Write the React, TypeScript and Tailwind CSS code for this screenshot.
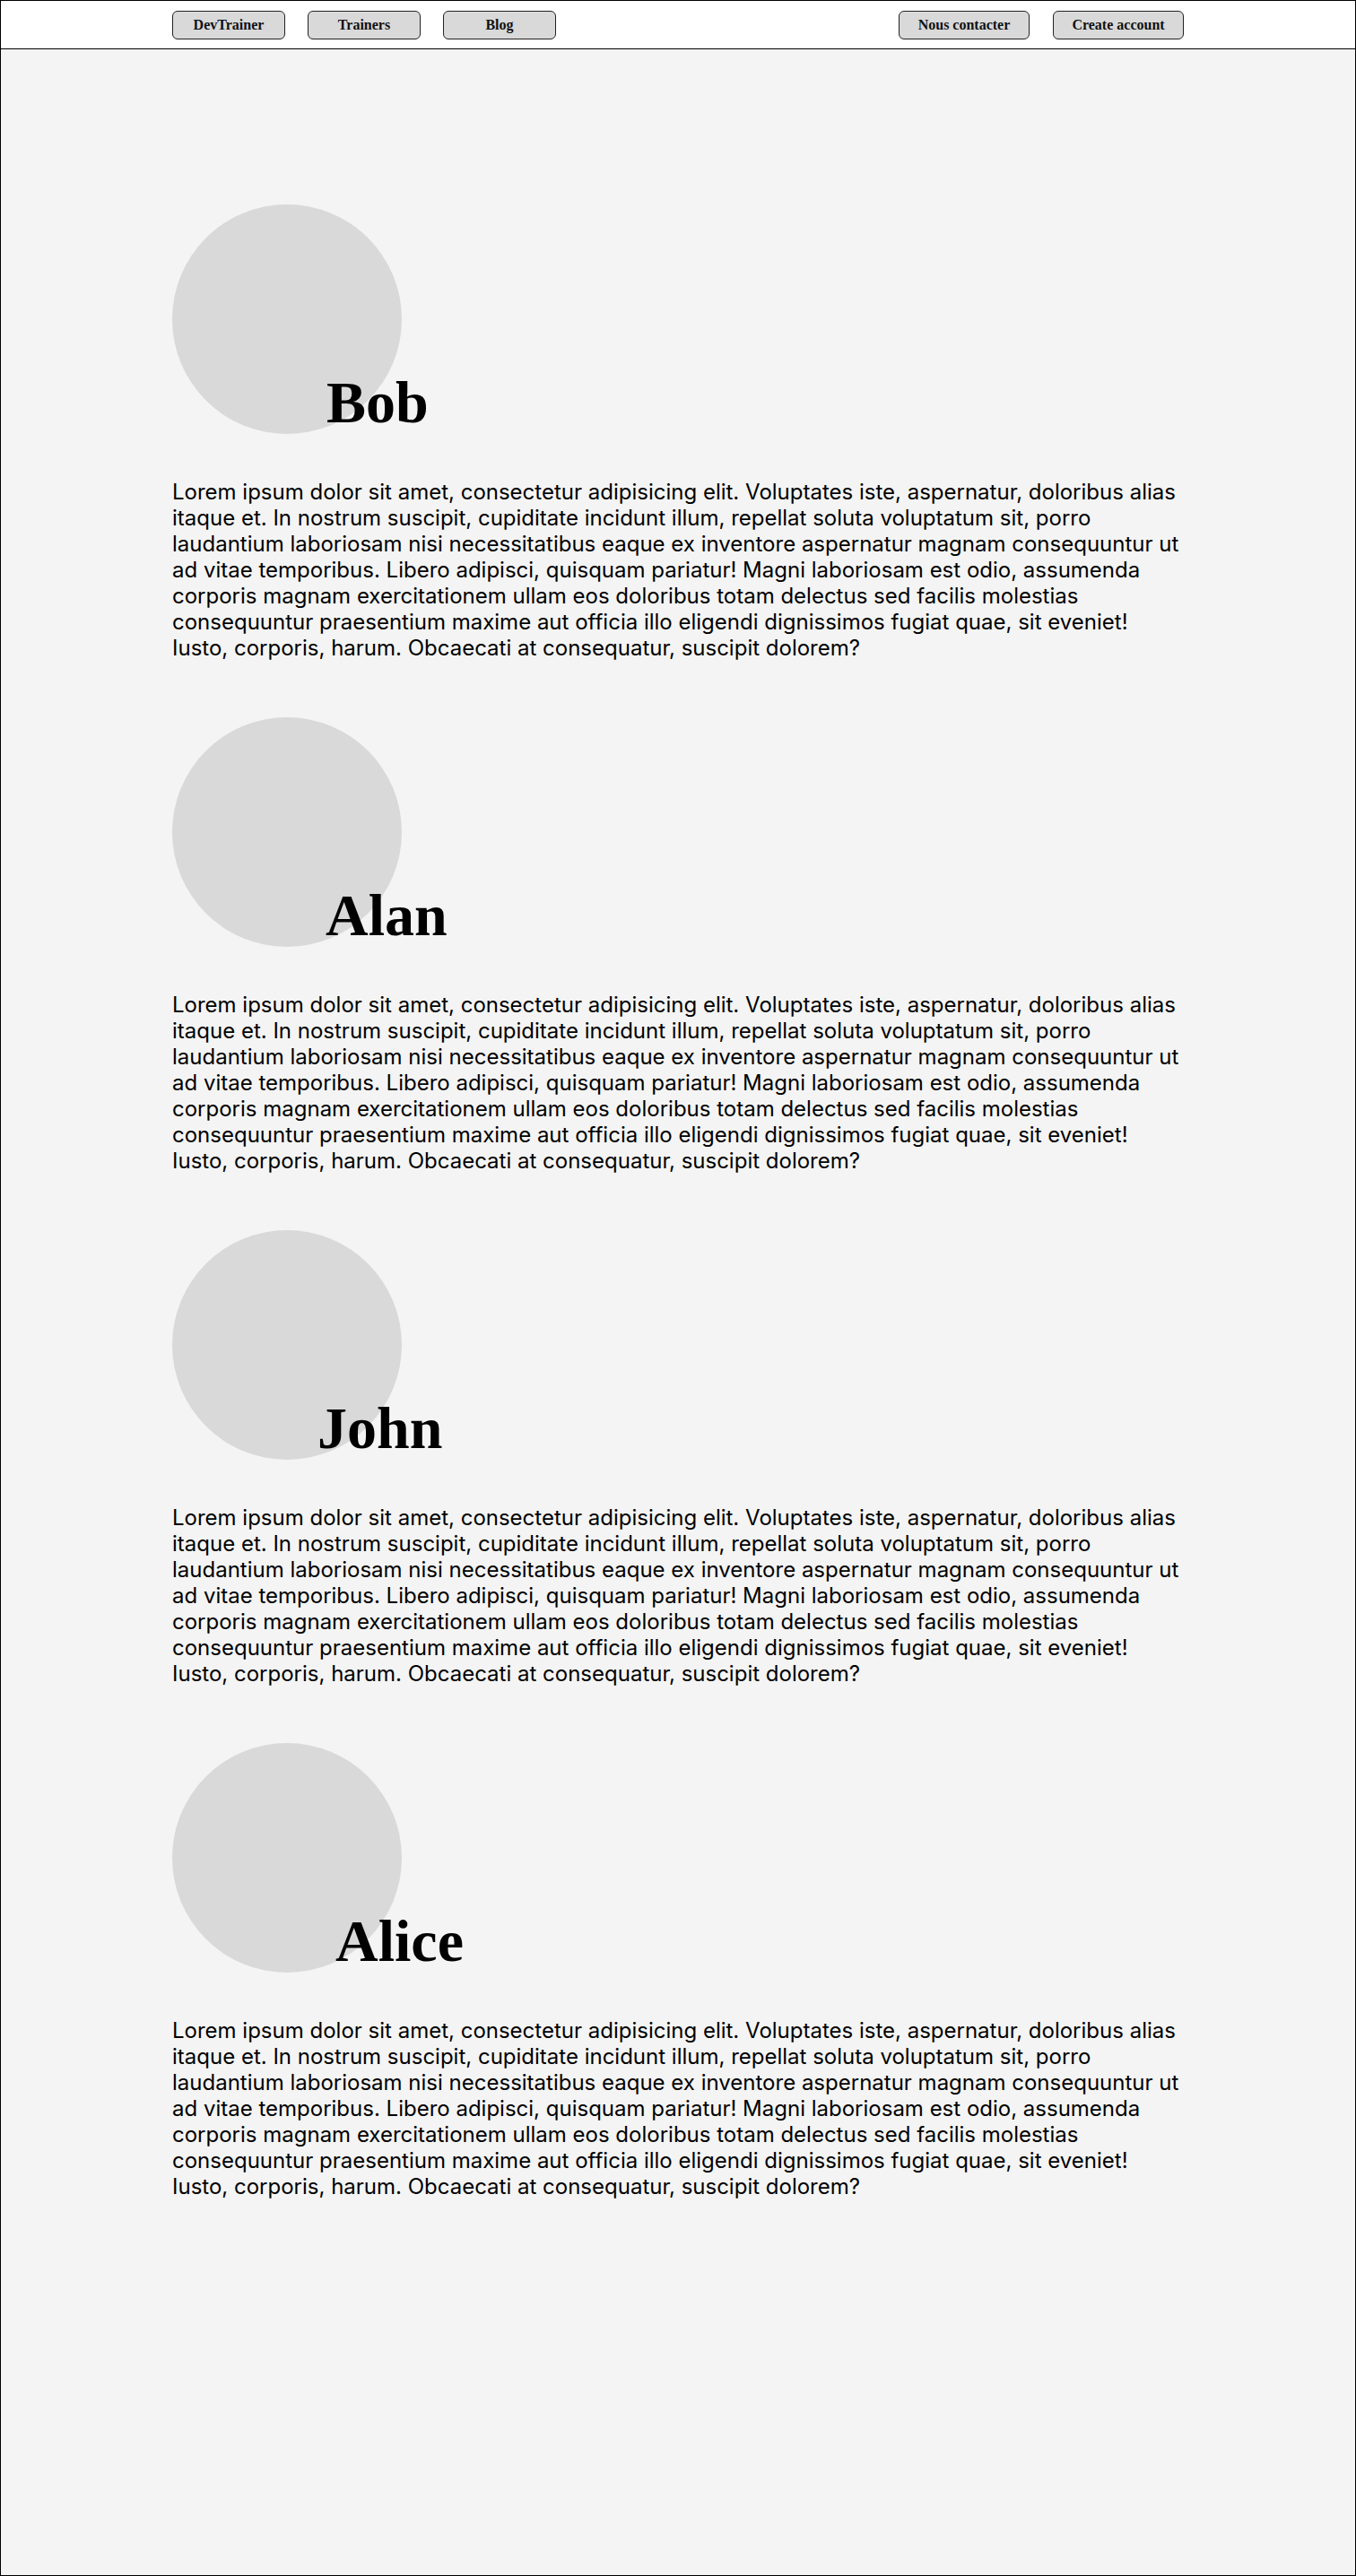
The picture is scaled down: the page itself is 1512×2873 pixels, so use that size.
const LOREM =
  "Lorem ipsum dolor sit amet, consectetur adipisicing elit. Voluptates iste, aspernatur, doloribus alias itaque et. In nostrum suscipit, cupiditate incidunt illum, repellat soluta voluptatum sit, porro laudantium laboriosam nisi necessitatibus eaque ex inventore aspernatur magnam consequuntur ut ad vitae temporibus. Libero adipisci, quisquam pariatur! Magni laboriosam est odio, assumenda corporis magnam exercitationem ullam eos doloribus totam delectus sed facilis molestias consequuntur praesentium maxime aut officia illo eligendi dignissimos fugiat quae, sit eveniet! Iusto, corporis, harum. Obcaecati at consequatur, suscipit dolorem?";

// name offsets are hand-tuned per trainer, the heading overlaps the avatar
const trainers = [
  { name: "Bob", offset: "-ml-[84px]" },
  { name: "Alan", offset: "-ml-[85px]" },
  { name: "John", offset: "-ml-[94px]" },
  { name: "Alice", offset: "-ml-[74px]" },
];

function NavButton({ label, wide }: { label: string; wide?: boolean }) {
  return (
    <button
      type="button"
      className={`flex h-8 items-center justify-center rounded-md border border-[#222] bg-[#d9d9d9] font-['Liberation_Serif',serif] text-base font-bold text-[#111] ${
        wide ? "w-[146px]" : "w-[126px]"
      }`}
    >
      {label}
    </button>
  );
}

function TrainerCard({ name, offset }: { name: string; offset: string }) {
  return (
    <section className="flex flex-col">
      <div className="flex items-end">
        <div className="h-64 w-64 shrink-0 rounded-full bg-[#d9d9d9]" />
        <h2
          className={`relative mb-[2px] font-['Liberation_Serif',serif] text-[66px] font-bold leading-none text-black ${offset}`}
        >
          {name}
        </h2>
      </div>
      <p className="mt-[50px] font-['Inter',sans-serif] text-2xl leading-[29px] text-black">
        {LOREM}
      </p>
    </section>
  );
}

export default function App() {
  return (
    <div className="min-h-[2873px] border border-black bg-[#f4f4f4]">
      <nav className="h-[54px] border-b border-black bg-white">
        <div className="mx-auto flex h-full w-[1128px] items-center justify-between">
          <div className="flex gap-[25px]">
            <NavButton label="DevTrainer" />
            <NavButton label="Trainers" />
            <NavButton label="Blog" />
          </div>
          <div className="flex gap-[26px]">
            <NavButton label="Nous contacter" wide />
            <NavButton label="Create account" wide />
          </div>
        </div>
      </nav>

      <main className="mx-auto flex w-[1128px] flex-col gap-[63px] pt-[173px]">
        {trainers.map((t) => (
          <TrainerCard key={t.name} name={t.name} offset={t.offset} />
        ))}
      </main>
    </div>
  );
}
